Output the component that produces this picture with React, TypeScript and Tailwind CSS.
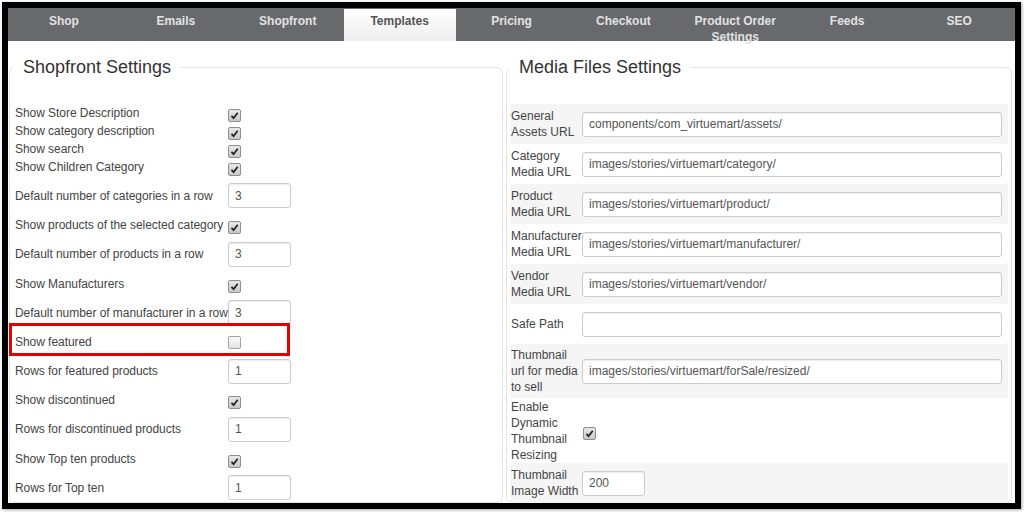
import React from 'react';

const FONT = { fontFamily: '"Liberation Sans", Arial, sans-serif' };

const tabs = ['Shop', 'Emails', 'Shopfront', 'Templates', 'Pricing', 'Checkout', 'Product Order Settings', 'Feeds', 'SEO'];

interface IShopRow {
  label: string;
  checked?: boolean;
  value?: string;
  highlight?: boolean;
}

const topRows: IShopRow[] = [
  { label: 'Show Store Description', checked: true },
  { label: 'Show category description', checked: true },
  { label: 'Show search', checked: true },
  { label: 'Show Children Category', checked: true },
];

const shopRows: IShopRow[] = [
  { label: 'Default number of categories in a row', value: '3' },
  { label: 'Show products of the selected category', checked: true },
  { label: 'Default number of products in a row', value: '3' },
  { label: 'Show Manufacturers', checked: true },
  { label: 'Default number of manufacturer in a row', value: '3' },
  { label: 'Show featured', checked: false, highlight: true },
  { label: 'Rows for featured products', value: '1' },
  { label: 'Show discontinued', checked: true },
  { label: 'Rows for discontinued products', value: '1' },
  { label: 'Show Top ten products', checked: true },
  { label: 'Rows for Top ten', value: '1' },
];

interface IMediaRow {
  lines: string[];
  value?: string;
  checked?: boolean;
  small?: boolean;
  height: string;
}

const mediaRows: IMediaRow[] = [
  { lines: ['General', 'Assets URL'], value: 'components/com_virtuemart/assets/', height: 'h-[40px]' },
  { lines: ['Category', 'Media URL'], value: 'images/stories/virtuemart/category/', height: 'h-[40px]' },
  { lines: ['Product', 'Media URL'], value: 'images/stories/virtuemart/product/', height: 'h-[40px]' },
  { lines: ['Manufacturer', 'Media URL'], value: 'images/stories/virtuemart/manufacturer/', height: 'h-[40px]' },
  { lines: ['Vendor', 'Media URL'], value: 'images/stories/virtuemart/vendor/', height: 'h-[40px]' },
  { lines: ['Safe Path'], value: '', height: 'h-[40px]' },
  { lines: ['Thumbnail', 'url for media', 'to sell'], value: 'images/stories/virtuemart/forSale/resized/', height: 'h-[54px]' },
  { lines: ['Enable', 'Dynamic', 'Thumbnail', 'Resizing'], checked: true, height: 'h-[65px]' },
  { lines: ['Thumbnail', 'Image Width'], value: '200', small: true, height: 'h-[40px]' },
];

const Check = ({ checked }: { checked: boolean }) => (
  <span
    className={
      checked
        ? 'inline-flex h-[13px] w-[13px] shrink-0 items-center justify-center rounded-[2px] border border-[#8f8f8f] bg-linear-to-b from-[#e8e8e8] to-[#c9c9c9]'
        : 'inline-flex h-[13px] w-[13px] shrink-0 items-center justify-center rounded-[2px] border border-[#a5a5a5] bg-linear-to-b from-[#fbfbfb] to-[#e2e2e2]'
    }
  >
    {checked && (
      <svg viewBox="0 0 10 10" className="h-[9px] w-[9px]">
        <path d="M1.6 5.4 L4 7.9 L8.6 2" stroke="#222" strokeWidth="1.9" fill="none" />
      </svg>
    )}
  </span>
);

const Field = ({ value, wide }: { value: string; wide?: boolean }) => (
  <input
    readOnly
    value={value}
    className={`${wide ? 'w-[420px]' : 'w-[63px]'} h-[25px] shrink-0 rounded-[3px] border border-[#cccccc] bg-white pl-[6px] text-[12px] text-[#555] shadow-[inset_0_1px_1px_rgba(0,0,0,0.075)] outline-none`}
    style={FONT}
  />
);

const ShopRow = ({ row, compact }: { row: IShopRow; compact?: boolean }) => (
  <div className={`relative flex items-center ${compact ? 'h-[18px]' : 'h-[29.2px]'}`}>
    <div className="w-[213px] shrink-0 whitespace-nowrap text-[12px] leading-[16px] tracking-[-0.05px] text-[#444]">{row.label}</div>
    {row.value !== undefined ? (
      <Field value={row.value} />
    ) : (
      <span className="translate-y-[2px]">
        <Check checked={!!row.checked} />
      </span>
    )}
    {row.highlight && (
      <span className="pointer-events-none absolute left-[-6px] top-[-4px] h-[33px] w-[281px] border-[3px] border-[#e30000]" />
    )}
  </div>
);

const App: React.FC = () => {
  return (
    <div className="h-[512px] w-[1024px] overflow-hidden bg-white p-[2px]" style={FONT}>
      <div className="h-[507px] w-[1019px] overflow-hidden border-[6px] border-black bg-white shadow-[1px_1px_3px_rgba(0,0,0,0.35)]">
        <div className="flex h-[495px] flex-col">
          <nav className="relative z-10 flex h-[33px] shrink-0 bg-[#68696d]">
            {tabs.map(tab =>
              tab === 'Templates' ? (
                <div
                  key={tab}
                  className="mt-[1px] flex-1 bg-linear-to-b from-white to-[#eeeeee] pt-[4px] text-center text-[12px] font-bold leading-[16px] text-[#555]"
                >
                  {tab}
                </div>
              ) : (
                <div key={tab} className="flex-1 pt-[5px] text-center text-[12px] font-bold leading-[16px] text-[#e2e2e2]">
                  <span className="inline-block px-[12px]">{tab}</span>
                </div>
              )
            )}
          </nav>

          <div className="flex min-h-0 flex-1 gap-[3px] pl-[1px] pr-[3px] pt-[15px]">
            <fieldset className="w-[494px] shrink-0 rounded-[6px] border border-[#e3e3e3] pb-[40px] pl-[5px]">
              <legend className="ml-[-2px] px-[10px] text-[18px] leading-[22px] text-[#333]">Shopfront Settings</legend>
              <div className="mt-[26px]">
                {topRows.map(row => (
                  <ShopRow key={row.label} row={row} compact />
                ))}
                <div className="mt-[5.4px]">
                  {shopRows.map(row => (
                    <ShopRow key={row.label} row={row} />
                  ))}
                </div>
              </div>
            </fieldset>

            <fieldset className="min-w-0 flex-1 rounded-[6px] border border-[#e3e3e3] pb-[40px] pl-[3px] pr-[3px]">
              <legend className="ml-[-1px] px-[10px] text-[18px] leading-[22px] text-[#333]">Media Files Settings</legend>
              <div className="mt-[26px]">
                {mediaRows.map((row, index) => (
                  <div
                    key={row.lines.join(' ')}
                    className={`flex items-center pl-[1px] pr-[6px] ${row.height} ${index % 2 === 0 ? 'bg-[#f5f5f5]' : 'bg-white'}`}
                  >
                    <div className="w-[71px] shrink-0 text-[12px] leading-[16px] text-[#444]">
                      {row.lines.map(line => (
                        <div key={line} className="whitespace-nowrap">{line}</div>
                      ))}
                    </div>
                    {row.checked !== undefined ? (
                      <span className="ml-[1px] translate-y-[2px]">
                        <Check checked={row.checked} />
                      </span>
                    ) : (
                      <Field value={row.value ?? ''} wide={!row.small} />
                    )}
                  </div>
                ))}
              </div>
            </fieldset>
          </div>
        </div>
      </div>
    </div>
  );
};

export default App;
